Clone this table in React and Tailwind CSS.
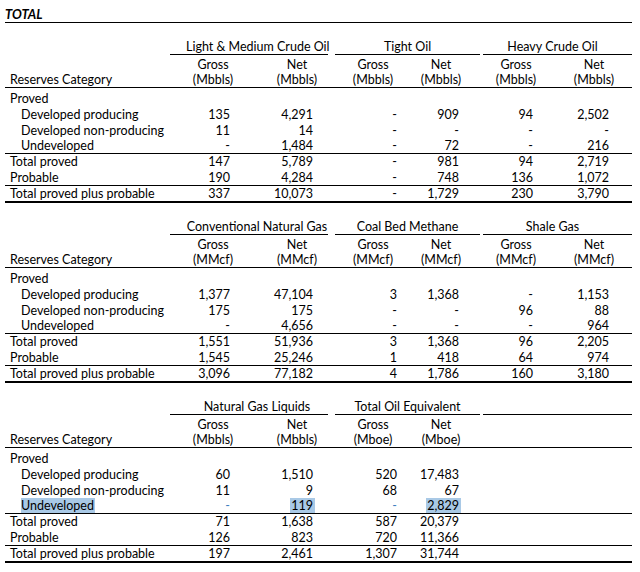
import React from 'react';

// column cells: width + right padding for numbers, headers centred in the cell
const cols = [
  { w: 'w-[86px]', pr: 'pr-[26px]' },
  { w: 'w-[82px]', pr: 'pr-[25px]' },
  { w: 'w-[70px]', pr: 'pr-[11px]' },
  { w: 'w-[66px]', pr: 'pr-[15px]' },
  { w: 'w-[84px]', pr: 'pr-[25px]' },
  { w: 'w-[72px]', pr: 'pr-[21px]' },
];

const groupBoxes = [
  'w-[158px] pl-[16px]',
  'ml-[7px] w-[145px]',
  'ml-[3px] w-[149px] pr-[10px]',
];

const tables = [
  {
    groups: ['Light & Medium Crude Oil', 'Tight Oil', 'Heavy Crude Oil'],
    units: ['Mbbls', 'Mbbls', 'Mbbls', 'Mbbls', 'Mbbls', 'Mbbls'],
    dp: ['135', '4,291', '-', '909', '94', '2,502'],
    dnp: ['11', '14', '-', '-', '-', '-'],
    und: ['-', '1,484', '-', '72', '-', '216'],
    tp: ['147', '5,789', '-', '981', '94', '2,719'],
    prob: ['190', '4,284', '-', '748', '136', '1,072'],
    tot: ['337', '10,073', '-', '1,729', '230', '3,790'],
  },
  {
    groups: ['Conventional Natural Gas', 'Coal Bed Methane', 'Shale Gas'],
    units: ['MMcf', 'MMcf', 'MMcf', 'MMcf', 'MMcf', 'MMcf'],
    dp: ['1,377', '47,104', '3', '1,368', '-', '1,153'],
    dnp: ['175', '175', '-', '-', '96', '88'],
    und: ['-', '4,656', '-', '-', '-', '964'],
    tp: ['1,551', '51,936', '3', '1,368', '96', '2,205'],
    prob: ['1,545', '25,246', '1', '418', '64', '974'],
    tot: ['3,096', '77,182', '4', '1,786', '160', '3,180'],
  },
  {
    groups: ['Natural Gas Liquids', 'Total Oil Equivalent', ''],
    units: ['Mbbls', 'Mbbls', 'Mboe', 'Mboe'],
    dp: ['60', '1,510', '520', '17,483'],
    dnp: ['11', '9', '68', '67'],
    und: ['-', '119', '-', '2,829'],
    tp: ['71', '1,638', '587', '20,379'],
    prob: ['126', '823', '720', '11,366'],
    tot: ['197', '2,461', '1,307', '31,744'],
    highlight: true,
  },
];

function Cells({ values, hl }) {
  return values.map((v, i) => (
    <div key={i} className={`${cols[i].w} ${cols[i].pr} text-right`}>
      {hl && v !== '-' ? (
        <span className="bg-[#a9c9e6] pl-[1px] -mr-[2px] pr-[2px]">{v}</span>
      ) : hl ? (
        <span className="text-[#3f7fbf]">{v}</span>
      ) : (
        v
      )}
    </div>
  ));
}

function Row({ label, indent, values = [], className = '', hl }) {
  return (
    <div className={`flex ${className}`}>
      <div className={`w-[165px] ${indent ? 'pl-[16px]' : 'pl-[5px]'}`}>
        {hl ? <span className="bg-[#a9c9e6] pr-[1px]">{label}</span> : label}
      </div>
      <Cells values={values} hl={hl} />
    </div>
  );
}

function ReserveTable({ t }) {
  return (
    <div>
      <div className="flex h-[16px]">
        <div className="w-[165px]" />
        {t.groups.map((g, i) => (
          <div key={i} className={`${groupBoxes[i]} border-b border-black text-center leading-[15px] whitespace-nowrap`}>
            {g}
          </div>
        ))}
      </div>
      <div className="pt-[2px]">
        <div className="flex h-[16px] leading-[16px]">
          <div className="w-[165px]" />
          {t.units.map((u, i) => (
            <div key={i} className={`${cols[i].w} text-center`}>{i % 2 === 0 ? 'Gross' : 'Net'}</div>
          ))}
        </div>
        <div className="flex h-[15px] leading-[14px] border-b border-black">
          <div className="w-[165px] pl-[5px]">Reserves Category</div>
          {t.units.map((u, i) => (
            <div key={i} className={`${cols[i].w} text-center`}>({u})</div>
          ))}
        </div>
      </div>
      <div className="pt-[3px]">
        <Row label="Proved" className="h-[16px] leading-[16px]" />
        <Row label="Developed producing" indent values={t.dp} className="h-[16px] leading-[16px]" />
        <Row label="Developed non-producing" indent values={t.dnp} className="h-[16px] leading-[16px]" />
        <Row label="Undeveloped" indent values={t.und} hl={t.highlight} className="h-[15px] leading-[14px] border-b border-black" />
        <Row label="Total proved" values={t.tp} className="h-[16px] leading-[16px]" />
        <Row label="Probable" values={t.prob} className="h-[16px] leading-[15px] border-b border-black" />
        <Row label="Total proved plus probable" values={t.tot} className="h-[17px] leading-[15px] border-b-2 border-black" />
      </div>
    </div>
  );
}

export default function App() {
  return (
    <div className="w-[640px] h-[572px] bg-white text-black text-[12.5px] font-['Lato',sans-serif] pt-[7px]">
      <div className="ml-[5px] w-[627px]">
        <div className="h-[16px] leading-[15px] border-b border-black font-bold italic text-[13px]">TOTAL</div>
        <div className="mt-[16px]">
          <ReserveTable t={tables[0]} />
        </div>
        <div className="mt-[16px]">
          <ReserveTable t={tables[1]} />
        </div>
        <div className="mt-[16px]">
          <ReserveTable t={tables[2]} />
        </div>
      </div>
    </div>
  );
}
